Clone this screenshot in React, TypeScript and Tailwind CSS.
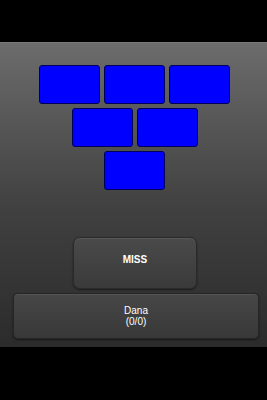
import React from "react";

const Tile = () => (
  <div className="w-[61px] h-[39px] bg-[#0000ff] border border-[#00005a] rounded-[3px]" />
);

export default function App() {
  return (
    <div className="w-[267px] h-[400px] bg-black pt-[42px]" style={{ fontFamily: '"Liberation Sans", Arial, sans-serif' }}>
      <div className="h-[305px] bg-gradient-to-b from-[#6c6c6c] via-[#404040] via-[55%] to-[#2b2b2b] border-t border-[#7a7a7a] flex flex-col items-center">
        <div className="flex flex-col items-center gap-[4px] pt-[22px] ml-[2px]">
          <div className="flex gap-[4px]">
            <Tile />
            <Tile />
            <Tile />
          </div>
          <div className="flex gap-[4px]">
            <Tile />
            <Tile />
          </div>
          <div className="flex gap-[4px]">
            <Tile />
          </div>
        </div>
        <button className="mt-[47px] ml-[3px] w-[124px] h-[52px] pb-[7px] rounded-[7px] bg-gradient-to-b from-[#4a4a4a] to-[#3a3a3a] border border-[#2a2a2a] shadow-[0_1px_2px_rgba(0,0,0,0.5),inset_0_1px_0_rgba(255,255,255,0.08)] text-white text-[10px] font-bold">
          MISS
        </button>
        <button className="mt-[4px] ml-[5px] w-[246px] h-[46px] rounded-[5px] bg-gradient-to-b from-[#474747] to-[#383838] border border-[#262626] shadow-[0_1px_2px_rgba(0,0,0,0.5),inset_0_1px_0_rgba(255,255,255,0.08)] text-white text-[10px] leading-[11px] flex flex-col items-center justify-center">
          <span>Dana</span>
          <span>(0/0)</span>
        </button>
      </div>
    </div>
  );
}
